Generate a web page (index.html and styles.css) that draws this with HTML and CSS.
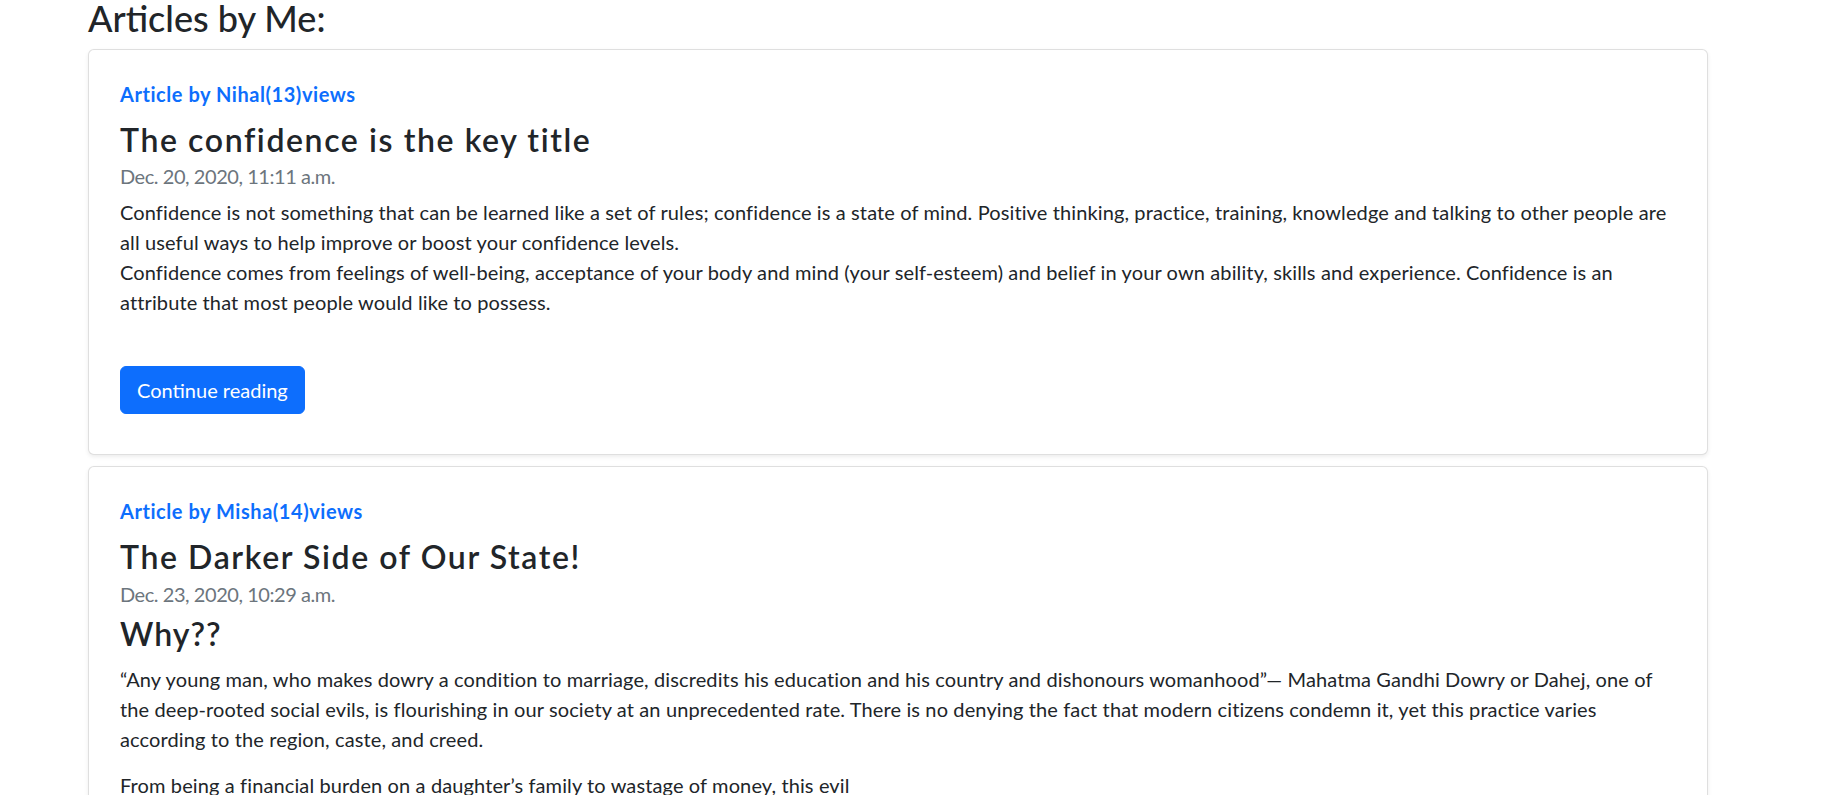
FILE: index.html
```html
<!DOCTYPE html>
<html lang="en">
<head>
<meta charset="utf-8">
<title>Articles by Me</title>
<link rel="stylesheet" href="styles.css">
</head>
<body>
<main class="page">
  <h1 class="page-title">Articles by Me:</h1>

  <article class="card">
    <div class="card-body">
      <a class="author" href="#">Article by Nihal(13)views</a>
      <h2 class="title">The confidence is the key title</h2>
      <p class="date">Dec. 20, 2020, 11:11 a.m.</p>
      <div class="content">
        <p>Confidence is not something that can be learned like a set of rules; confidence is a state of mind. Positive thinking, practice, training, knowledge and talking to other people are all useful ways to help improve or boost your confidence levels.<br>Confidence comes from feelings of well-being, acceptance of your body and mind (your self-esteem) and belief in your own ability, skills and experience. Confidence is an attribute that most people would like to possess.</p>
      </div>
      <a class="btn" href="#">Continue reading</a>
    </div>
  </article>

  <article class="card">
    <div class="card-body">
      <a class="author" href="#">Article by Misha(14)views</a>
      <h2 class="title">The Darker Side of Our State!</h2>
      <p class="date">Dec. 23, 2020, 10:29 a.m.</p>
      <div class="content">
        <h2 class="content-heading">Why??</h2>
        <p>“Any young man, who makes dowry a condition to marriage, discredits his education and his country and dishonours womanhood”— Mahatma Gandhi Dowry or Dahej, one of the deep-rooted social evils, is flourishing in our society at an unprecedented rate. There is no denying the fact that modern citizens condemn it, yet this practice varies according to the region, caste, and creed.</p>
        <p>From being a financial burden on a daughter’s family to wastage of money, this evil</p>
      </div>
    </div>
  </article>
</main>
</body>
</html>
```
FILE: styles.css
```css
* {
  box-sizing: border-box;
}

html, body {
  margin: 0;
  padding: 0;
  background: #ffffff;
}

body {
  font-family: "Lato", "Segoe UI", "Liberation Sans", sans-serif;
  color: #212529;
  font-size: 20px;
  line-height: 1.5;
}

.page {
  margin: 0 131px 0 88px;
}

.page-title {
  font-size: 36px;
  font-weight: 500;
  line-height: 36px;
  margin: 0 0 13px 0;
}

.card {
  background: #fff;
  border: 1px solid rgba(0, 0, 0, 0.125);
  border-radius: 6px;
  box-shadow: 0 2px 4px rgba(0, 0, 0, 0.075);
  margin-bottom: 11px;
}

.card-body {
  padding: 32px 32px 32px 31px;
}

.author {
  display: block;
  font-size: 20px;
  font-weight: 700;
  line-height: 24px;
  letter-spacing: 0.55px;
  color: #0d6efd;
  text-decoration: none;
  margin-bottom: 15px;
}

.title {
  font-size: 32px;
  font-weight: 600;
  line-height: 1.2;
  letter-spacing: 1.6px;
  margin: 0 0 2px 0;
}

.date {
  color: #6c757d;
  letter-spacing: -0.45px;
  margin: 0 0 6px 0;
}

.content p {
  letter-spacing: 0.12px;
  margin: 0 0 16px 0;
}

.content-heading {
  font-size: 32px;
  font-weight: 600;
  line-height: 1.2;
  letter-spacing: 1px;
  margin: 0 0 11px 0;
}

.btn {
  display: inline-block;
  margin: 33px 0 8px 0;
  padding: 8px 16px;
  font-size: 20px;
  line-height: 30px;
  border: 1px solid #0d6efd;
  border-radius: 6px;
  background: #0d6efd;
  color: #fff;
  text-decoration: none;
}
```
